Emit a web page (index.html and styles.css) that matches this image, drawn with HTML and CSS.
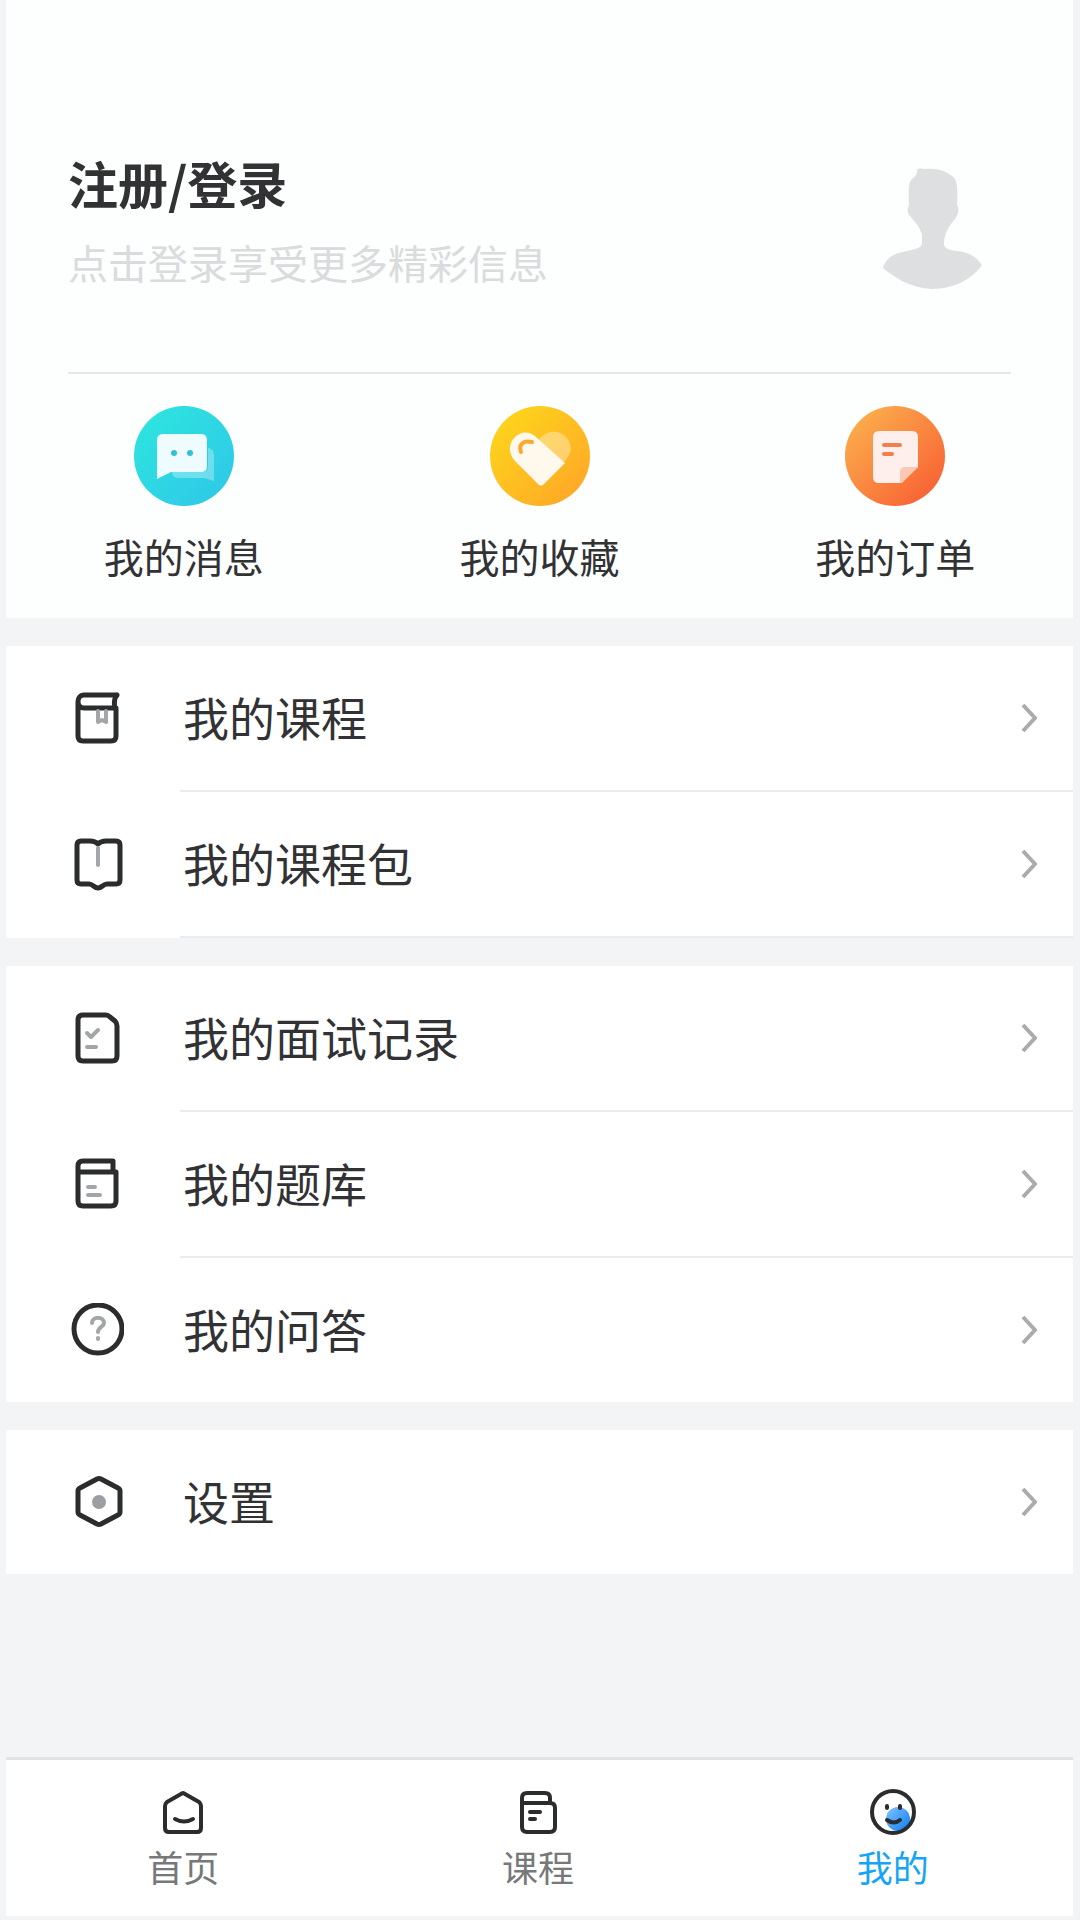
FILE: index.html
```html
<!DOCTYPE html>
<html lang="zh-CN">
<head>
  <meta charset="UTF-8">
  <meta name="viewport" content="width=device-width, initial-scale=1.0">
  <title>我的</title>
  <link rel="stylesheet" href="styles.css">
</head>
<body>
  <main>
    <!-- 登录信息 -->
    <section class="profile">
      <a class="login" href="#login">
        <div>
          <h1>注册/登录</h1>
          <p>点击登录享受更多精彩信息</p>
        </div>
        <svg class="avatar" viewBox="0 0 100 122">
          <path fill="#dedfe1" d="M34 4C33 0 37 0 42 1C54 0 63 3 69 8C74 11 75 19 74 37C77 41 75 47 72 51C66 58 62 64 61 74C60 80 64 81 73 83C85 84 93 88 99 97C90 110 72 121 49 121C28 120 12 110 0 100C3 90 10 86 20 84C33 81 39 80 39 75V67C37 59 32 54 27 48C24 45 24 41 26 37C25 19 26 13 30 10C33 8 33 7 34 4z"/>
        </svg>
      </a>

      <nav class="quick">
        <a href="#message">
          <svg class="quick-icon" viewBox="0 0 100 100">
            <defs>
              <linearGradient id="cyan" x1="0" y1="0" x2="1" y2="1">
                <stop offset="0.1" stop-color="#2de4df"/>
                <stop offset="0.9" stop-color="#2fc9e8"/>
              </linearGradient>
            </defs>
            <circle cx="50" cy="50" r="50" fill="url(#cyan)"/>
            <path fill="#fff" opacity="0.3" d="M38 66H68q6 0 6-6V42q6 1 6 7V75l-10-3H43q-5-1-5-6z"/>
            <path fill="#effcff" d="M29 28H67q6 0 6 6V60q0 6-6 6H37L23 73V34q0-6 6-6z"/>
            <circle cx="40" cy="47" r="3" fill="#35bfd2"/>
            <circle cx="56" cy="47" r="3" fill="#35bfd2"/>
          </svg>
          <span>我的消息</span>
        </a>
        <a href="#favorite">
          <svg class="quick-icon" viewBox="0 0 100 100">
            <defs>
              <linearGradient id="yellow" x1="0" y1="0" x2="1" y2="1">
                <stop offset="0.1" stop-color="#fdd51c"/>
                <stop offset="0.9" stop-color="#ffa827"/>
              </linearGradient>
            </defs>
            <circle cx="50" cy="50" r="50" fill="url(#yellow)"/>
            <path fill="#fff" opacity="0.35" d="M51 31C59 24 69 24 76 31C83 39 82 47 75 55L60 60L45 40z"/>
            <path fill="#fff8ec" d="M46 31L75 57L54 78Q51 81 48 78L26 56C18 48 18 38 25 31C31 25 40 25 46 31z"/>
            <path fill="none" stroke="#ffa72b" stroke-width="4" stroke-linecap="round" d="M31 46C28 38 34 34 42 36"/>
          </svg>
          <span>我的收藏</span>
        </a>
        <a href="#order">
          <svg class="quick-icon" viewBox="0 0 100 100">
            <defs>
              <linearGradient id="orange" x1="0" y1="0" x2="1" y2="1">
                <stop offset="0.1" stop-color="#fcae4c"/>
                <stop offset="0.9" stop-color="#f86134"/>
              </linearGradient>
            </defs>
            <circle cx="50" cy="50" r="50" fill="url(#orange)"/>
            <path fill="#ffefec" d="M34 25H67q6 0 6 6V61L56 77H34q-6 0-6-6V31q0-6 6-6z"/>
            <path fill="#fbc8b4" d="M73 61L57 77H55V66q0-5 5-5z"/>
            <path stroke="#f57e4d" stroke-width="4" stroke-linecap="round" d="M39 39H55M39 48H47"/>
          </svg>
          <span>我的订单</span>
        </a>
      </nav>
    </section>

    <!-- 课程 -->
    <section class="menu menu-lined">
      <a href="#course">
        <svg class="menu-icon" viewBox="0 0 54 54">
          <path d="M47 4H14C6 4 6 17 14 17H46M47 4Q43 9 45 17M8 11V45q0 5 5 5H41q5 0 5-5V17"/>
          <path class="soft" d="M28 20V31L32 29L36 31V20"/>
        </svg>
        <span>我的课程</span>
        <svg class="arrow" viewBox="0 0 16 30"><path d="M2 2L14 15L2 28"/></svg>
      </a>
      <a href="#package">
        <svg class="menu-icon" viewBox="0 0 54 54">
          <path d="M28 7C25 4 23 4 20 4H11q-4 0-4 4V43q0 4 4 4H19C23 47 24 51 28 51S33 47 37 47H46q4 0 4-4V8q0-4-4-4H36C33 4 31 4 28 7z"/>
          <path class="soft" d="M28 11V28"/>
        </svg>
        <span>我的课程包</span>
        <svg class="arrow" viewBox="0 0 16 30"><path d="M2 2L14 15L2 28"/></svg>
      </a>
    </section>

    <!-- 练习与问答 -->
    <section class="menu">
      <a href="#interview">
        <svg class="menu-icon" viewBox="0 0 54 54">
          <path d="M13 4H36Q38 4 40 6L45 10Q47 12 47 15V45q0 5-5 5H13q-5 0-5-5V9q0-5 5-5z"/>
          <path class="soft" d="M17 22L21 26L28 19M17 36H26"/>
        </svg>
        <span>我的面试记录</span>
        <svg class="arrow" viewBox="0 0 16 30"><path d="M2 2L14 15L2 28"/></svg>
      </a>
      <a href="#bank">
        <svg class="menu-icon" viewBox="0 0 54 54">
          <path d="M8 15V9q0-5 5-5H43V15M8 15H46V44q0 5-5 5H13q-5 0-5-5z"/>
          <path class="soft" d="M18 30H25M18 38H30"/>
        </svg>
        <span>我的题库</span>
        <svg class="arrow" viewBox="0 0 16 30"><path d="M2 2L14 15L2 28"/></svg>
      </a>
      <a href="#qa">
        <svg class="menu-icon" viewBox="0 0 54 54">
          <circle cx="28" cy="26" r="24"/>
          <path class="soft" d="M22 20C22 13 34 13 34 20C34 24 28 24 28 29M28 35V36"/>
        </svg>
        <span>我的问答</span>
        <svg class="arrow" viewBox="0 0 16 30"><path d="M2 2L14 15L2 28"/></svg>
      </a>
    </section>

    <!-- 设置 -->
    <section class="menu">
      <a href="#settings">
        <svg class="menu-icon" viewBox="0 0 54 54">
          <path d="M27 4Q29 3 31 4L48 13Q50 14 50 16V37Q50 39 48 40L31 49Q29 50 27 49L10 40Q8 39 8 37V16Q8 14 10 13z"/>
          <circle class="dot" cx="29" cy="27" r="7"/>
        </svg>
        <span>设置</span>
        <svg class="arrow" viewBox="0 0 16 30"><path d="M2 2L14 15L2 28"/></svg>
      </a>
    </section>
  </main>

  <!-- 底部导航 -->
  <nav class="tabbar">
    <a href="#home">
      <svg class="tab-icon" viewBox="0 0 48 48">
        <path d="M22 5Q24 3 26 5L40 13Q42 15 42 17V39q0 4-4 4H10q-4 0-4-4V17Q6 15 8 13z"/>
        <path d="M16 30Q25 35 34 30"/>
      </svg>
      <span>首页</span>
    </a>
    <a href="#lessons">
      <svg class="tab-icon" viewBox="0 0 48 48">
        <path d="M8 14V9q0-5 5-5H31q5 0 5 5V14M8 14H36q5 0 5 5V38q0 5-5 5H13q-5 0-5-5z"/>
        <path d="M16 23H26M16 30H21"/>
      </svg>
      <span>课程</span>
    </a>
    <a class="active" href="#mine">
      <svg class="tab-icon" viewBox="0 0 48 48">
        <defs>
          <linearGradient id="blue" x1="0" y1="0" x2="1" y2="1">
            <stop offset="0" stop-color="#83c4ff"/>
            <stop offset="1" stop-color="#0c7df2"/>
          </linearGradient>
        </defs>
        <circle class="ball" cx="29" cy="30" r="12"/>
        <circle cx="24" cy="23" r="21"/>
        <path d="M18 17V19M31 17V19M18 31Q25 36 31 31"/>
      </svg>
      <span>我的</span>
    </a>
  </nav>
</body>
</html>
```
FILE: styles.css
```css
/* General Styles */
* {
  box-sizing: border-box;
}

body {
  font-family: "Noto Sans CJK SC", sans-serif;
  background-color: #f3f4f6;
  color: #323235;
  margin: 0;
  padding: 0 7px 4px 6px;
  min-height: 100vh;
  display: flex;
  flex-direction: column;
}

a {
  color: inherit;
  text-decoration: none;
}

svg {
  display: block;
  flex: none;
}

main {
  flex: 1;
}

/* Profile */
.profile {
  background-color: #fdfefe;
  padding-top: 142px;
  padding-bottom: 32px;
  margin-bottom: 28px;
}

.login {
  display: flex;
  justify-content: space-between;
  margin: 0 62px;
  height: 232px;
  border-bottom: 2px solid #e6e7eb;
}

.login h1 {
  font-size: 50px;
  line-height: 80px;
  font-weight: 700;
  margin: 0;
}

.login p {
  font-size: 40px;
  line-height: 80px;
  color: #dadbdd;
  margin: 0;
}

.avatar {
  width: 100px;
  height: 122px;
  margin: 26px 28px;
}

.quick {
  display: flex;
  padding-top: 32px;
}

.quick a {
  flex: 1;
  display: flex;
  flex-direction: column;
  align-items: center;
  gap: 20px;
}

.quick span {
  font-size: 40px;
  line-height: 60px;
}

.quick-icon {
  width: 100px;
  height: 100px;
}

/* Menu */
.menu {
  background-color: #fff;
  margin-bottom: 28px;
}

.menu a {
  display: flex;
  align-items: center;
  padding-left: 64px;
  padding-right: 36px;
}

.menu span {
  flex: 1;
  margin-left: 59px;
  padding-bottom: 4px;
  font-size: 46px;
  line-height: 140px;
}

/* the divider starts at the text and runs to the card edge */
.menu a:not(:last-child),
.menu-lined a {
  background: linear-gradient(#ebecef, #ebecef) 174px 100% / 100% 2px no-repeat;
  padding-bottom: 2px;
}

.menu-icon {
  width: 54px;
  height: 54px;
}

.menu-icon path,
.menu-icon circle,
.tab-icon path,
.tab-icon circle {
  fill: none;
  stroke: #2b2c2e;
  stroke-width: 5;
  stroke-linecap: round;
  stroke-linejoin: round;
}

.tab-icon path,
.tab-icon circle {
  stroke-width: 4;
}

.menu-icon .soft {
  stroke: #a3a6a9;
  stroke-width: 4;
}

.menu-icon .dot {
  fill: #9b9ea2;
  stroke: none;
}

.arrow {
  width: 16px;
  height: 30px;
}

.arrow path {
  fill: none;
  stroke: #aaabae;
  stroke-width: 4;
}

/* Tab bar */
.tabbar {
  display: flex;
  background-color: #fff;
  border-top: 3px solid #e2e3e6;
  padding: 29px 3px 23px 0;
}

.tabbar a {
  flex: 1;
  display: flex;
  flex-direction: column;
  align-items: center;
  gap: 2px;
}

.tabbar span {
  font-size: 36px;
  line-height: 54px;
  color: #77787a;
}

.tabbar .active span {
  color: #16a5f5;
}

.tab-icon {
  width: 48px;
  height: 48px;
}

.tab-icon .ball {
  fill: url(#blue);
  stroke: none;
}
```
